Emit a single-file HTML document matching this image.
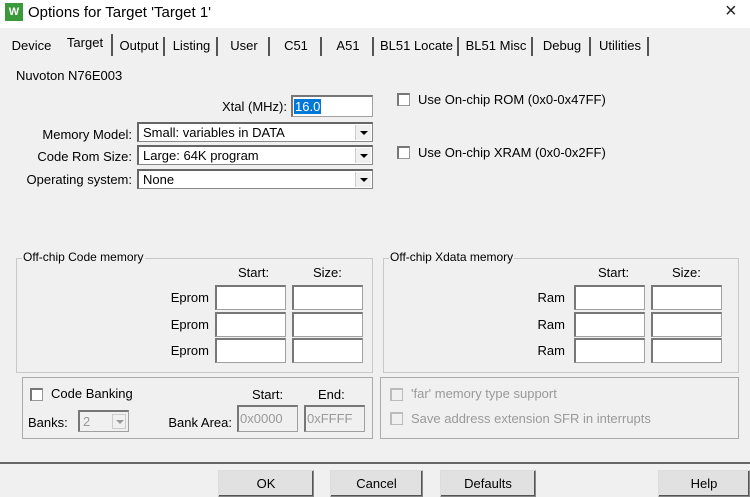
<!DOCTYPE html>
<html><head><style>
*{margin:0;padding:0;box-sizing:border-box}
body{width:750px;height:497px;background:#f0f0f0;font-family:"Liberation Sans",sans-serif;font-size:13px;color:#000;position:relative;overflow:hidden}
.a{position:absolute;white-space:nowrap}
.r{position:absolute;white-space:nowrap;text-align:right}
.tab{position:absolute;top:37px;height:19px;border-right:2px solid #555;padding-top:1px;text-align:center;font-size:13px}
.in{position:absolute;background:#fff;border:1px solid #a0a0a0;border-top:2px solid #777;border-left:2px solid #777}
.sel{position:absolute;background:#fff;border:1px solid #888;border-top:2px solid #666;border-left:2px solid #666;padding:1px 4px;height:20px}
.sel .ar{position:absolute;right:1px;top:1px;width:16px;height:15px;background:#f0f0f0;border-left:1px solid #ccc}
.sel .ar:after{content:"";position:absolute;left:4px;top:6px;border-left:4px solid transparent;border-right:4px solid transparent;border-top:4px solid #000}
.cb{position:absolute;width:13px;height:13px;background:#fff;border:1px solid #999;border-top:2px solid #777;border-left:2px solid #777}
.grp{position:absolute;border:1px solid #c8c8c8}
.gt{position:absolute;top:-9px;left:5px;background:#f0f0f0;padding:0 1px;font-size:12px}
.btn{position:absolute;top:470px;height:27px;background:#e1e1e1;border:1px solid #888;border-top:1px solid #ddd;border-left:1px solid #ddd;box-shadow:inset -1px -1px 0 #555;text-align:center;padding-top:5px;font-size:13px}
.g{color:#999}
</style></head><body>
<div class="a" style="left:0;top:0;width:750px;height:28px;background:#fff"></div>
<div class="a" style="left:5px;top:3px;width:18px;height:18px;background:#3a9a3a;color:#fff;font-size:11px;font-weight:bold;text-align:center;line-height:18px">W</div>
<div class="a" style="left:28px;top:4px;font-size:15px">Options for Target 'Target 1'</div>
<div class="a" style="left:725px;top:0px;font-size:20px;font-weight:300;color:#222">×</div>

<div class="tab" style="left:5px;width:53px;border-right:none">Device</div>
<div class="tab" style="left:59px;top:34px;height:22px;width:54px;background:#f0f0f0;font-size:13px">Target</div>
<div class="tab" style="left:115px;width:50px">Output</div>
<div class="tab" style="left:167px;width:51px">Listing</div>
<div class="tab" style="left:220px;width:50px">User</div>
<div class="tab" style="left:272px;width:50px">C51</div>
<div class="tab" style="left:324px;width:50px">A51</div>
<div class="tab" style="left:376px;width:83px">BL51 Locate</div>
<div class="tab" style="left:461px;width:72px">BL51 Misc</div>
<div class="tab" style="left:535px;width:56px">Debug</div>
<div class="tab" style="left:593px;width:56px">Utilities</div>

<div class="a" style="left:16px;top:68px">Nuvoton N76E003</div>
<div class="r" style="right:463px;top:99px">Xtal (MHz):</div>
<div class="in" style="left:291px;top:95px;width:82px;height:22px"><span style="position:absolute;left:1px;top:2px;background:#0078d7;color:#fff;padding:0 1px">16.0</span></div>
<div class="r" style="right:618px;top:127px">Memory Model:</div>
<div class="sel" style="left:137px;top:122px;width:236px">Small: variables in DATA<div class="ar"></div></div>
<div class="r" style="right:618px;top:149px">Code Rom Size:</div>
<div class="sel" style="left:137px;top:145px;width:236px">Large: 64K program<div class="ar"></div></div>
<div class="r" style="right:618px;top:172px">Operating system:</div>
<div class="sel" style="left:137px;top:169px;width:236px">None<div class="ar"></div></div>

<div class="cb" style="left:397px;top:93px"></div>
<div class="a" style="left:418px;top:92px">Use On-chip ROM (0x0-0x47FF)</div>
<div class="cb" style="left:397px;top:146px"></div>
<div class="a" style="left:418px;top:145px">Use On-chip XRAM (0x0-0x2FF)</div>

<div class="grp" style="left:16px;top:258px;width:357px;height:115px"><div class="gt">Off-chip Code memory</div></div>
<div class="a" style="left:238px;top:265px">Start:</div>
<div class="a" style="left:313px;top:265px">Size:</div>
<div class="r" style="right:541px;top:290px">Eprom</div>
<div class="r" style="right:541px;top:317px">Eprom</div>
<div class="r" style="right:541px;top:343px">Eprom</div>
<div class="in" style="left:215px;top:285px;width:71px;height:25px"></div>
<div class="in" style="left:292px;top:285px;width:71px;height:25px"></div>
<div class="in" style="left:215px;top:312px;width:71px;height:25px"></div>
<div class="in" style="left:292px;top:312px;width:71px;height:25px"></div>
<div class="in" style="left:215px;top:338px;width:71px;height:25px"></div>
<div class="in" style="left:292px;top:338px;width:71px;height:25px"></div>

<div class="grp" style="left:383px;top:258px;width:356px;height:115px"><div class="gt">Off-chip Xdata memory</div></div>
<div class="a" style="left:598px;top:265px">Start:</div>
<div class="a" style="left:672px;top:265px">Size:</div>
<div class="r" style="right:185px;top:290px">Ram</div>
<div class="r" style="right:185px;top:317px">Ram</div>
<div class="r" style="right:185px;top:343px">Ram</div>
<div class="in" style="left:574px;top:285px;width:71px;height:25px"></div>
<div class="in" style="left:651px;top:285px;width:71px;height:25px"></div>
<div class="in" style="left:574px;top:312px;width:71px;height:25px"></div>
<div class="in" style="left:651px;top:312px;width:71px;height:25px"></div>
<div class="in" style="left:574px;top:338px;width:71px;height:25px"></div>
<div class="in" style="left:651px;top:338px;width:71px;height:25px"></div>

<div class="grp" style="left:22px;top:377px;width:351px;height:62px;border-color:#aaa"></div>
<div class="cb" style="left:30px;top:388px"></div>
<div class="a" style="left:51px;top:386px">Code Banking</div>
<div class="a" style="left:252px;top:387px">Start:</div>
<div class="a" style="left:318px;top:387px">End:</div>
<div class="a" style="left:28px;top:415px">Banks:</div>
<div class="in g" style="left:78px;top:410px;width:51px;height:22px;background:#f0f0f0;padding:2px 3px">2<div style="position:absolute;right:2px;top:2px;width:14px;height:15px;border:1px solid #ccc"><div style="position:absolute;left:3px;top:5px;border-left:4px solid transparent;border-right:4px solid transparent;border-top:4px solid #999"></div></div></div>
<div class="r" style="right:518px;top:415px">Bank Area:</div>
<div class="in g" style="left:237px;top:405px;width:61px;height:27px;background:#f0f0f0;padding:4px 1px">0x0000</div>
<div class="in g" style="left:304px;top:405px;width:61px;height:27px;background:#f0f0f0;padding:4px 1px">0xFFFF</div>

<div class="grp" style="left:380px;top:377px;width:359px;height:62px;border-color:#aaa"></div>
<div class="cb" style="left:390px;top:388px;background:#f0f0f0;border-color:#bbb"></div>
<div class="a g" style="left:411px;top:386px">'far' memory type support</div>
<div class="cb" style="left:390px;top:412px;background:#f0f0f0;border-color:#bbb"></div>
<div class="a g" style="left:411px;top:411px">Save address extension SFR in interrupts</div>

<div class="a" style="left:0;top:462px;width:750px;height:2px;background:#666"></div>
<div class="btn" style="left:218px;width:96px">OK</div>
<div class="btn" style="left:330px;width:93px">Cancel</div>
<div class="btn" style="left:440px;width:96px">Defaults</div>
<div class="btn" style="left:658px;width:92px">Help</div>
</body></html>
